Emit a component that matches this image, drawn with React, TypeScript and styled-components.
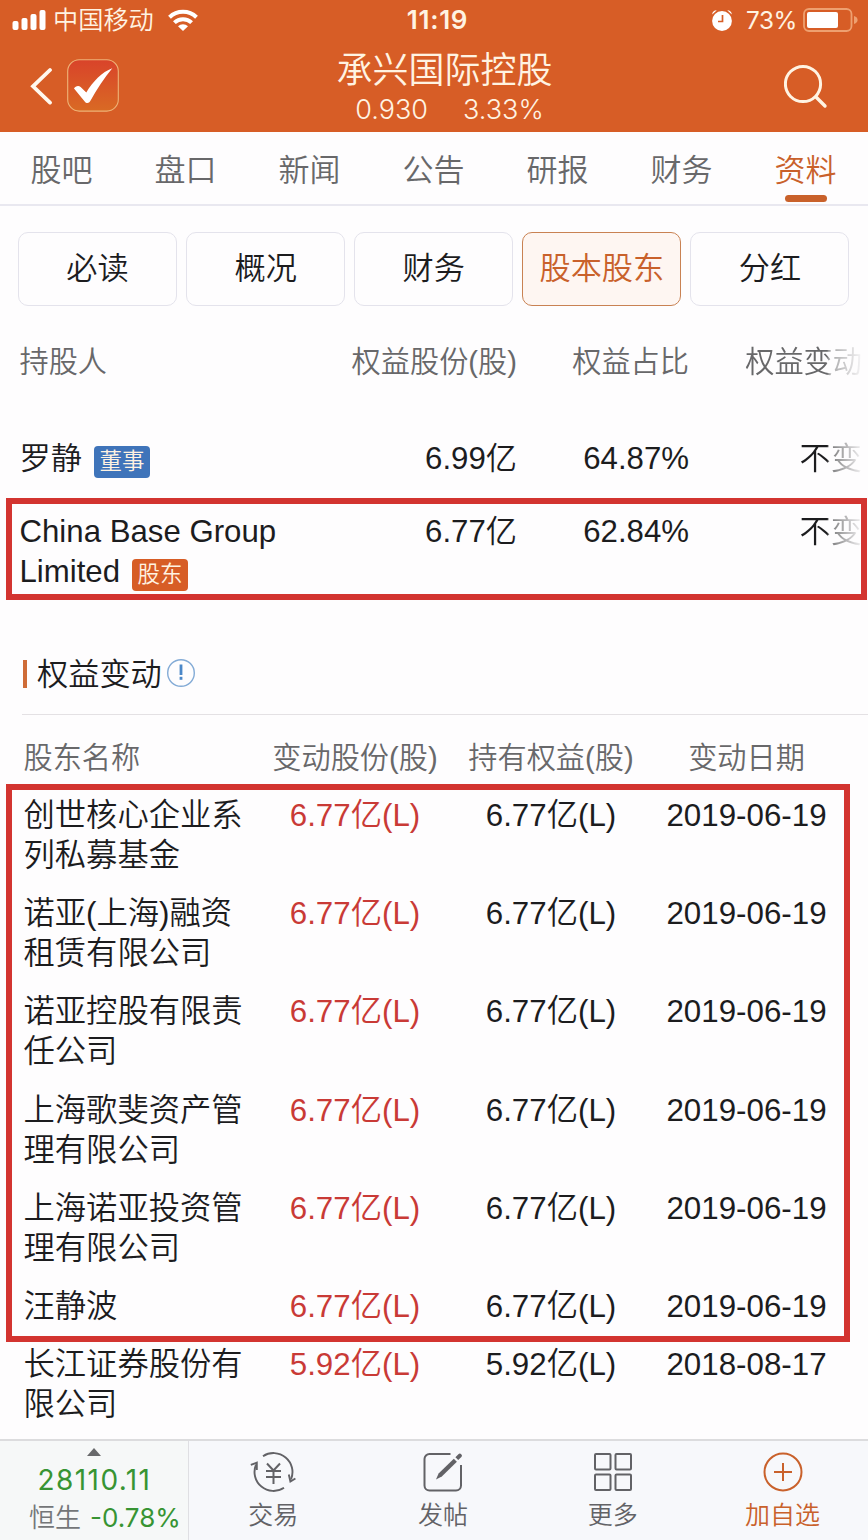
import React from "react";
import styled, { createGlobalStyle, css } from "styled-components";

const ORANGE = "#d75d26";
const ACCENT = "#c9612b";
const INK = "#1c1c1e";
const GREY = "#68686a";
const MARK = "#d33430";
const UI = `"Liberation Sans", "Noto Sans CJK SC", sans-serif`;
const DIGITS = `Inter, "Noto Sans CJK SC", sans-serif`;

const Global = createGlobalStyle`
  * { box-sizing: border-box; }
  body { margin: 0; background: #fefdfe; font-family: ${UI}; font-weight: 350; color: ${INK}; }
`;

const Screen = styled.div`
  width: 868px;
  height: 1540px;
  display: flex;
  flex-direction: column;
  overflow: hidden;
  white-space: nowrap;
`;

const Content = styled.main`
  flex: 1;
  min-height: 0;
  overflow: hidden;
`;

const Header = styled.header`
  height: 132px;
  flex: none;
  background: ${ORANGE};
  color: #fff3e2;
  display: flex;
  flex-direction: column;
`;

const StatusBar = styled.div`
  height: 40px;
  padding: 0 10px 0 12px;
  display: grid;
  grid-template-columns: 1fr auto 1fr;
  align-items: center;
  font-family: ${DIGITS};
`;

const StatusGroup = styled.div<{ $end?: boolean }>`
  display: flex;
  align-items: center;
  justify-content: ${(p) => (p.$end ? "flex-end" : "flex-start")};
`;

const Carrier = styled.span`
  margin: 0 14px 0 6px;
  font-size: 25.2px;
  line-height: 40px;
`;

const Clock = styled.span`
  padding-left: 5px;
  font-size: 26px;
  font-weight: 600;
  letter-spacing: 0.7px;
  line-height: 40px;
`;

const Percent = styled.span`
  margin: 0 6px 0 13px;
  font-size: 24.3px;
  font-weight: 400;
  letter-spacing: -0.4px;
  line-height: 40px;
`;

const TitleBar = styled.div`
  height: 92px;
  padding: 0 40px 0 30px;
  display: grid;
  grid-template-columns: 240px 350px 1fr;
  align-items: start;
`;

const NavLeft = styled.div`
  display: flex;
  gap: 14px;
  padding-top: 19px;
  align-items: center;
`;

const TitleBlock = styled.div`
  display: flex;
  flex-direction: column;
  align-items: center;
`;

const Title = styled.h1`
  margin: 9px 0 0 -1px;
  font-size: 36px;
  font-weight: 350;
  line-height: 44px;
`;

const Quote = styled.div`
  display: flex;
  gap: 35px;
  padding-left: 9px;
  font-family: ${DIGITS};
  font-size: 27px;
  line-height: 34px;
`;

const SearchSlot = styled.div`
  display: flex;
  justify-content: flex-end;
  padding-top: 23px;
`;

const Tabs = styled.nav`
  height: 74px;
  border-bottom: 2px solid #e9e8f0;
  display: flex;
`;

const Tab = styled.div<{ $active?: boolean }>`
  width: 124px;
  display: flex;
  flex-direction: column;
  align-items: center;
  font-size: 31px;
  line-height: 40px;
  padding-top: 19px;
  color: ${(p) => (p.$active ? ACCENT : GREY)};
  ${(p) =>
    p.$active &&
    css`
      &::after {
        content: "";
        width: 42px;
        height: 7px;
        margin-top: 4px;
        border-radius: 3.5px;
        background: ${ACCENT};
      }
    `}
`;

const TabText = styled.span`
  margin-left: -1px;
`;

const Chips = styled.div`
  display: flex;
  gap: 9px;
  padding: 26px 18.5px 0 18px;
`;

const Chip = styled.div<{ $active?: boolean }>`
  flex: 1;
  height: 74px;
  border: 1.5px solid ${(p) => (p.$active ? "#c98253" : "#e4e3ec")};
  border-radius: 10px;
  background: ${(p) => (p.$active ? "#fef6f2" : "transparent")};
  color: ${(p) => (p.$active ? ACCENT : INK)};
  font-size: 31.2px;
  line-height: 71px;
  text-align: center;
`;

const HolderRow = styled.div<{ $head?: boolean }>`
  display: grid;
  grid-template-columns: 300.5px 197px 172px 173px;
  padding-left: 19.5px;
  line-height: 40px;
  font-size: ${(p) => (p.$head ? 29.2 : 31.2)}px;
  color: ${(p) => (p.$head ? GREY : INK)};
  text-align: right;
`;

const HolderTable = styled.section`
  padding-top: 36px;
`;

const HolderName = styled.div`
  text-align: left;
`;

const Fading = styled.div`
  mask-image: linear-gradient(to right, #000 138px, rgba(0, 0, 0, 0.6) 140px, transparent 176px);
`;

const Spacer = styled.div<{ $h: number }>`
  height: ${(p) => p.$h}px;
`;

const Tag = styled.span<{ $tone: string }>`
  display: inline-block;
  width: 56px;
  height: 32px;
  margin: -8px 0 -8px 12px;
  border-radius: 4px;
  background: ${(p) => p.$tone};
  color: #fff3e2;
  font-size: 22.5px;
  line-height: 31px;
  text-align: center;
  vertical-align: 0.5px;
`;

const HolderMark = styled.div`
  width: 861px;
  height: 102px;
  margin: 19px 0 0 6px;
  border: 6.5px solid ${MARK};
  padding-top: 8px;

  ${HolderRow} {
    margin-left: -12px;
    margin-right: -6px;
  }
`;

const SectionTitle = styled.h2`
  margin: 54px 0 0 22px;
  height: 61px;
  border-bottom: 1.5px solid #e4e1e4;
  display: flex;
  align-items: flex-start;
  font-size: 31.2px;
  font-weight: 350;
  line-height: 41px;

  &::before {
    content: "";
    width: 4px;
    height: 28px;
    margin: 6px 10px 0 1px;
    background: #cf6c38;
  }

  svg {
    margin: 5px 0 0 4px;
  }
`;

const ChangeRow = styled.div<{ $head?: boolean }>`
  display: grid;
  grid-template-columns: 233.5px 196px 196px 195px;
  padding-left: 23.5px;
  margin-bottom: ${(p) => (p.$head ? 0 : 18.2)}px;
  line-height: 40px;
  font-size: ${(p) => (p.$head ? 29.2 : 31.3)}px;
  color: ${(p) => (p.$head ? GREY : INK)};
  text-align: center;
`;

const ChangeName = styled.div`
  text-align: left;
  white-space: pre-line;
`;

const Delta = styled.div`
  color: #c93a36;
`;

const ChangeMark = styled.div`
  width: 844px;
  height: 558px;
  margin: 6px 0 0 6px;
  border: 6.5px solid ${MARK};
  padding-top: 6px;

  ${ChangeRow} {
    margin-left: -12px;
  }
`;

const BottomBar = styled.footer`
  height: 101px;
  flex: none;
  border-top: 2px solid #dcdcde;
  background: #f7f8fb;
  display: flex;
`;

const IndexCell = styled.div`
  width: 189px;
  border-right: 1.5px solid #dfdfe3;
  background: #f6f8f8;
  display: flex;
  flex-direction: column;
  align-items: center;
  font-family: ${DIGITS};
  font-weight: 400;
  color: #379433;

  svg {
    margin-top: 7px;
  }
`;

const IndexValue = styled.div`
  margin-top: 7px;
  padding-left: 1px;
  font-size: 28px;
  letter-spacing: 1.4px;
  line-height: 34px;
`;

const IndexChange = styled.div`
  display: flex;
  gap: 9px;
  margin: 3px 0 0 23px;
  align-self: flex-start;
  padding-left: 6px;
  font-size: 26px;
  line-height: 36px;

  span {
    color: #747678;
    font-weight: 350;
  }
`;

const Action = styled.div<{ $accent?: boolean }>`
  flex: 1;
  display: flex;
  flex-direction: column;
  align-items: center;
  padding: 11px 1px 0 0;
  color: ${(p) => (p.$accent ? ACCENT : "#626266")};
  font-size: 25px;
  line-height: 36px;

  svg {
    margin-bottom: 3px;
  }
`;

const SignalIcon = () => (
  <svg width="35" height="22" viewBox="0 0 35 22" fill="#fff">
    <rect x="0.5" y="12" width="6" height="9" rx="2" />
    <rect x="9.5" y="9" width="6" height="12" rx="2" />
    <rect x="18.5" y="5" width="6" height="16" rx="2" />
    <rect x="27.5" y="1" width="6" height="20" rx="2" />
  </svg>
);

const WifiIcon = () => (
  <svg width="30" height="22" viewBox="0 0 30 22" fill="none" stroke="#fff" strokeWidth="4">
    <path d="M1.5 8.2a19.5 19.5 0 0 1 27 0" />
    <path d="M6.4 13.6a12.4 12.4 0 0 1 17.2 0" />
    <path d="M10 17.2a7.2 7.2 0 0 1 10 0L15 22z" fill="#fff" stroke="none" />
  </svg>
);

const AlarmIcon = () => (
  <svg width="22" height="22" viewBox="0 0 22 22">
    <circle cx="11" cy="12" r="9.900" fill="#fff" />
    <path d="M1.200 5.600C1.200 3 3 1.200 5.800 1.200zM20.800 5.600C20.800 3 19 1.200 16.200 1.200z" fill="#fff" />
    <path d="M11.5 6v6.5H7" stroke={ORANGE} strokeWidth="1.7" fill="none" />
  </svg>
);

const BatteryIcon = () => (
  <svg width="55" height="24" viewBox="0 0 55 24">
    <rect x="1" y="1" width="47.5" height="22" rx="5" fill="none" stroke="#eea070" strokeWidth="1.8" />
    <rect x="4" y="4" width="31" height="16" rx="2" fill="#fff" />
    <path d="M51 8c2.6.8 3.6 2.2 3.6 4s-1 3.2-3.6 4z" fill="#eea070" />
  </svg>
);

const BackIcon = () => (
  <svg width="23" height="38" viewBox="0 0 23 38" fill="none" stroke="#fff8ee" strokeWidth="3.8" strokeLinecap="round">
    <path d="M20 3 3 19.3 20 35.6" />
  </svg>
);

const AppLogo = () => (
  <svg width="52" height="53" viewBox="0 0 52 53">
    <defs>
      <linearGradient id="logo" x1="0" y1="0" x2="0" y2="1">
        <stop offset="0" stopColor="#d9432a" />
        <stop offset="1" stopColor="#d96a24" />
      </linearGradient>
    </defs>
    <rect x="0.7" y="0.7" width="50.6" height="51.4" rx="11.5" fill="url(#logo)" stroke="#eeb377" strokeWidth="1.1" />
    <path d="M7 29.500c1.200-2.400 4.600-3.600 6.600-1.500l5.700 5.500C25.500 23 35 13 45.300 9.300c-8.500 10.200-15.300 21-22 32.700-1.200 2.400-4 2.600-5.600.4z" fill="#fff" />
  </svg>
);

const SearchIcon = () => (
  <svg width="44" height="46" viewBox="0 0 44 46" fill="none" stroke="#fff3e2" strokeWidth="3" strokeLinecap="round">
    <circle cx="19" cy="21" r="17.600" />
    <path d="M32 34 41 43" strokeWidth="3.400" />
  </svg>
);

const InfoIcon = () => (
  <svg width="30" height="30" viewBox="0 0 30 30" fill="none" stroke="#83abd6">
    <circle cx="15" cy="14" r="13.300" strokeWidth="1.400" />
    <path d="M15 5.500v10.500" stroke="#4b87c8" strokeWidth="2.800" />
    <path d="M15 17.800v3" stroke="#4b87c8" strokeWidth="2.800" />
  </svg>
);

const TradeIcon = () => (
  <svg width="46" height="42" viewBox="0 0 46 42" fill="none" stroke="currentColor" strokeWidth="1.900">
    <path d="M13 4.200A19 19 0 0 1 41 27.400" />
    <path d="M6 12.600A19 19 0 0 0 34 35.800" />
    <path d="M0.800 12.800 6.800 10.700V18M45.400 26.500 40.400 29.500 38.800 22.500" />
    <path d="M17 11.500 23.500 18.500 30 11.500M16 19h15M16 25h15M23.500 18.500V32" strokeWidth="2" />
  </svg>
);

const PostIcon = () => (
  <svg width="40" height="42" viewBox="0 0 40 42" fill="none" stroke="currentColor" strokeWidth="2">
    <path d="M27.500 2H6.500a5 5 0 0 0-5 5v26.500a5 5 0 0 0 5 5h26.500a5 5 0 0 0 5-5V13" />
    <path d="M13 27.500l2.600-6L30.800 6.800l3.100 3L18.800 24.500z" fill="currentColor" stroke="none" />
    <path d="M32.400 5.300l3-3a1.900 1.900 0 0 1 3 2.700l-3.200 3z" fill="currentColor" stroke="none" />
  </svg>
);

const MoreIcon = () => (
  <svg width="38" height="42" viewBox="0 0 38 42" fill="none" stroke="currentColor" strokeWidth="2">
    <rect x="1" y="2" width="15.500" height="15.500" rx="1" />
    <rect x="21.500" y="2" width="15.500" height="15.500" rx="1" />
    <rect x="1" y="22.500" width="15.500" height="15.500" rx="1" />
    <rect x="21.500" y="22.500" width="15.500" height="15.500" rx="1" />
  </svg>
);

const AddIcon = () => (
  <svg width="42" height="42" viewBox="0 0 42 42" fill="none" stroke="currentColor" strokeWidth="2">
    <circle cx="21" cy="20" r="18.500" />
    <path d="M21 11v18M12 20h18" />
  </svg>
);

const tabs = ["股吧", "盘口", "新闻", "公告", "研报", "财务", "资料"];
const chips = ["必读", "概况", "财务", "股本股东", "分红"];

const changes = [
  ["创世核心企业系\n列私募基金", "6.77亿(L)", "2019-06-19"],
  ["诺亚(上海)融资\n租赁有限公司", "6.77亿(L)", "2019-06-19"],
  ["诺亚控股有限责\n任公司", "6.77亿(L)", "2019-06-19"],
  ["上海歌斐资产管\n理有限公司", "6.77亿(L)", "2019-06-19"],
  ["上海诺亚投资管\n理有限公司", "6.77亿(L)", "2019-06-19"],
  ["汪静波", "6.77亿(L)", "2019-06-19"],
];

const Change = ({ row }: { row: string[] }) => (
  <ChangeRow>
    <ChangeName>{row[0]}</ChangeName>
    <Delta>{row[1]}</Delta>
    <div>{row[1]}</div>
    <div>{row[2]}</div>
  </ChangeRow>
);

export default function App() {
  return (
    <Screen>
      <Global />
      <Header>
        <StatusBar>
          <StatusGroup>
            <SignalIcon />
            <Carrier>中国移动</Carrier>
            <WifiIcon />
          </StatusGroup>
          <Clock>11:19</Clock>
          <StatusGroup $end>
            <AlarmIcon />
            <Percent>73%</Percent>
            <BatteryIcon />
          </StatusGroup>
        </StatusBar>
        <TitleBar>
          <NavLeft>
            <BackIcon />
            <AppLogo />
          </NavLeft>
          <TitleBlock>
            <Title>承兴国际控股</Title>
            <Quote>
              <span>0.930</span>
              <span>3.33%</span>
            </Quote>
          </TitleBlock>
          <SearchSlot>
            <SearchIcon />
          </SearchSlot>
        </TitleBar>
      </Header>

      <Content>
        <Tabs>
          {tabs.map((t) => (
            <Tab key={t} $active={t === "资料"}>
              <TabText>{t}</TabText>
            </Tab>
          ))}
        </Tabs>

        <Chips>
          {chips.map((c) => (
            <Chip key={c} $active={c === "股本股东"}>
              {c}
            </Chip>
          ))}
        </Chips>

        <HolderTable>
          <HolderRow $head>
            <HolderName>持股人</HolderName>
            <div>权益股份(股)</div>
            <div>权益占比</div>
            <Fading>权益变动</Fading>
          </HolderRow>
          <Spacer $h={57} />
          <HolderRow>
            <HolderName>
              罗静
              <Tag $tone="#3f74ba">董事</Tag>
            </HolderName>
            <div>6.99亿</div>
            <div>64.87%</div>
            <Fading>不变</Fading>
          </HolderRow>
          <HolderMark>
            <HolderRow>
              <HolderName>
                <div>China Base Group</div>
                <div>
                  Limited
                  <Tag $tone={ORANGE}>股东</Tag>
                </div>
              </HolderName>
              <div>6.77亿</div>
              <div>62.84%</div>
              <Fading>不变</Fading>
            </HolderRow>
          </HolderMark>
        </HolderTable>

        <SectionTitle>
          权益变动
          <InfoIcon />
        </SectionTitle>

        <section>
          <Spacer $h={23} />
          <ChangeRow $head>
            <ChangeName>股东名称</ChangeName>
            <div>变动股份(股)</div>
            <div>持有权益(股)</div>
            <div>变动日期</div>
          </ChangeRow>
          <ChangeMark>
            {changes.map((row) => (
              <Change key={row[0]} row={row} />
            ))}
          </ChangeMark>
          <Spacer $h={3} />
          <Change row={["长江证券股份有\n限公司", "5.92亿(L)", "2018-08-17"]} />
        </section>
      </Content>

      <BottomBar>
        <IndexCell>
          <svg width="14" height="8" viewBox="0 0 14 8">
            <path d="M7 0 14 8H0z" fill="#68696b" />
          </svg>
          <IndexValue>28110.11</IndexValue>
          <IndexChange>
            <span>恒生</span>-0.78%
          </IndexChange>
        </IndexCell>
        <Action>
          <TradeIcon />
          交易
        </Action>
        <Action>
          <PostIcon />
          发帖
        </Action>
        <Action>
          <MoreIcon />
          更多
        </Action>
        <Action $accent>
          <AddIcon />
          加自选
        </Action>
      </BottomBar>
    </Screen>
  );
}
